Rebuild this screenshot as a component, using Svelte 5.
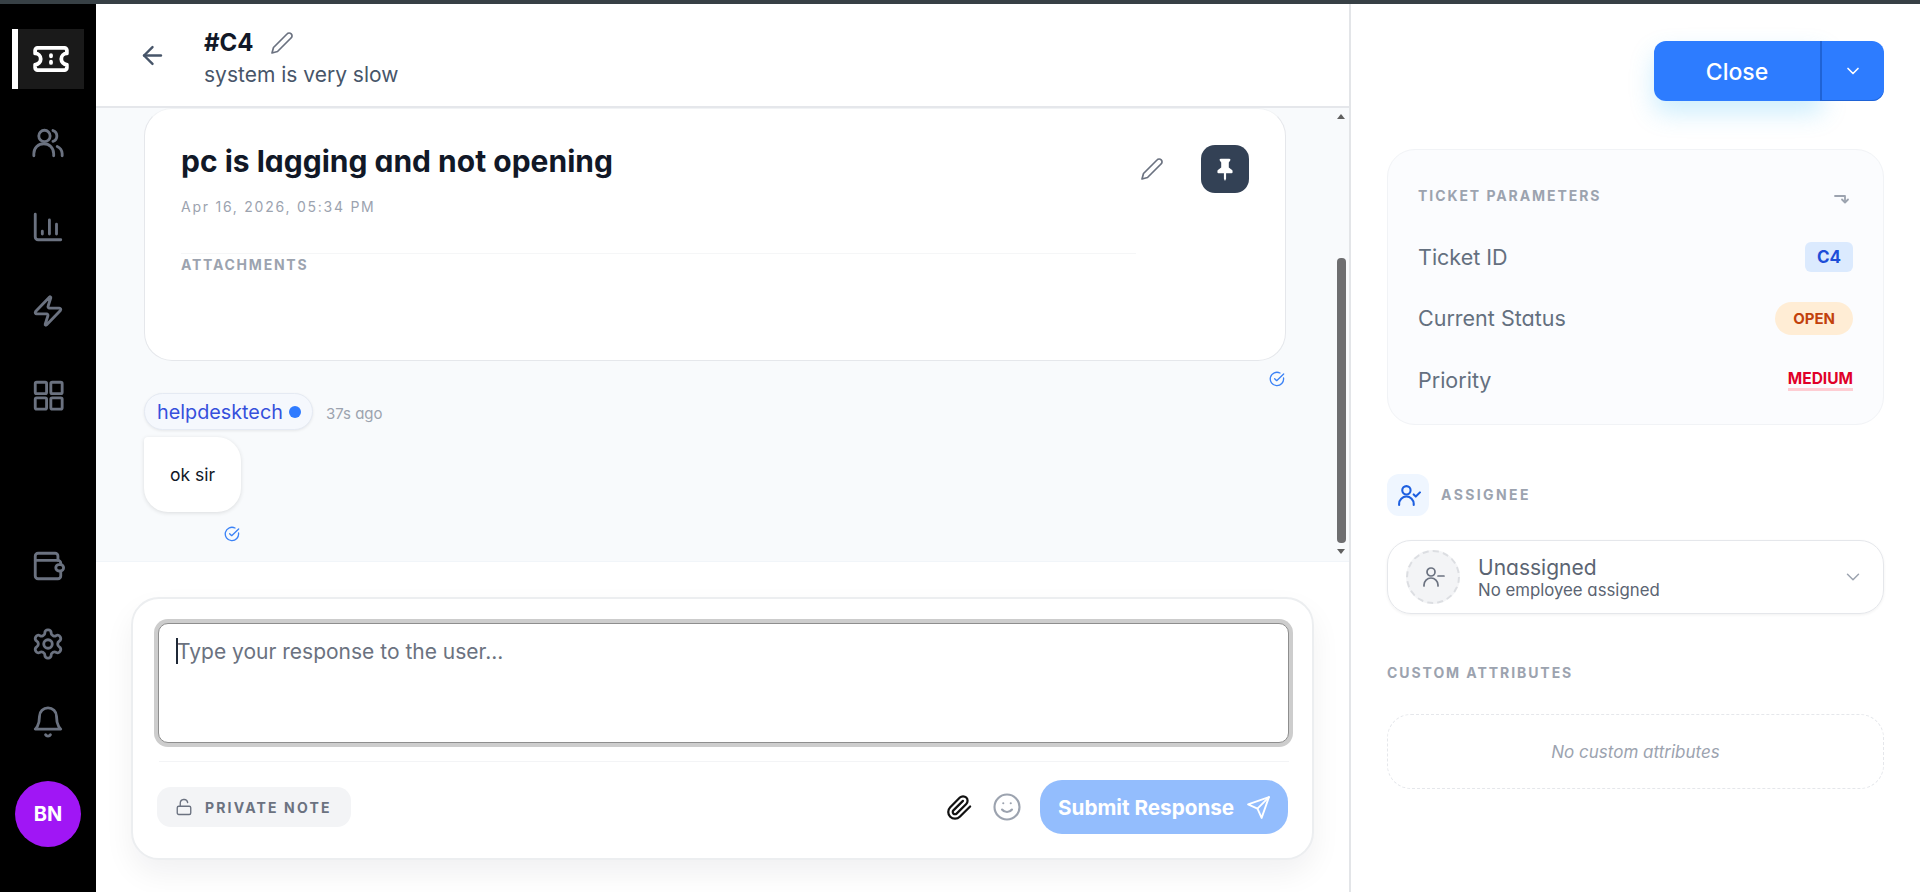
<script>
	const params = [
		{ label: 'Ticket ID', value: 'C4', kind: 'id' },
		{ label: 'Current Status', value: 'OPEN', kind: 'status' },
		{ label: 'Priority', value: 'MEDIUM', kind: 'priority' }
	];
</script>

<div class="app">
	<div class="topbar"></div>
	<div class="body">
		<nav class="nav">
			<div class="nav-item active">
				<svg class="ticket" viewBox="0 0 24 24"><path d="M3.500 5h17A1.500 1.500 0 0 1 22 6.500V8.500a3.500 3.500 0 0 0 0 7v2a1.500 1.500 0 0 1-1.500 1.500h-17A1.500 1.500 0 0 1 2 17.500v-2a3.500 3.500 0 0 0 0-7v-2A1.500 1.500 0 0 1 3.500 5z" /><path d="M12 9.500v.8M12 13.700v.8" /></svg>
			</div>
			<div class="nav-item">
				<svg viewBox="0 0 24 24"><circle cx="9.500" cy="7" r="4" /><path d="M2 21v-1.500a7 7 0 0 1 14 0V21" /><path d="M15.500 3.200a4 4 0 0 1 0 7.600" /><path d="M18.500 14.500a6 6 0 0 1 3.500 5V21" /></svg>
			</div>
			<div class="nav-item">
				<svg viewBox="0 0 24 24"><path d="M3 3v16a2 2 0 0 0 2 2h16" /><path d="M8 17v-2M13 17V7M18 17v-7" /></svg>
			</div>
			<div class="nav-item">
				<svg viewBox="0 0 24 24"><path d="M4 14a1 1 0 0 1-.78-1.630l9.900-10.200a.5.5 0 0 1 .86.460l-1.920 6.020A1 1 0 0 0 13 10h7a1 1 0 0 1 .78 1.630l-9.900 10.200a.5.5 0 0 1-.86-.460l1.920-6.020A1 1 0 0 0 11 14z" /></svg>
			</div>
			<div class="nav-item">
				<svg viewBox="0 0 24 24"><rect x="3" y="3" width="8" height="8" rx="1" /><rect x="14" y="3" width="8" height="8" rx="1" /><rect x="3" y="14" width="8" height="8" rx="1" /><rect x="14" y="14" width="8" height="8" rx="1" /></svg>
			</div>
			<div class="nav-spacer"></div>
			<div class="nav-item small">
				<svg viewBox="0 0 24 24"><path d="M3 8V5a2 2 0 0 1 2-2h12a2 2 0 0 1 2 2v3" /><path d="M3 8h16a2 2 0 0 1 2 2v1M3 8v11a2 2 0 0 0 2 2h14a2 2 0 0 0 2-2v-3" /><rect x="17.500" y="11" width="5.500" height="4.500" rx="2.200" /></svg>
			</div>
			<div class="nav-item small">
				<svg viewBox="0 0 24 24"><path d="M12.220 2h-.44a2 2 0 0 0-2 2v.18a2 2 0 0 1-1 1.730l-.43.25a2 2 0 0 1-2 0l-.15-.08a2 2 0 0 0-2.730.73l-.22.38a2 2 0 0 0 .73 2.730l.15.1a2 2 0 0 1 1 1.720v.51a2 2 0 0 1-1 1.740l-.15.09a2 2 0 0 0-.73 2.730l.22.38a2 2 0 0 0 2.730.73l.15-.08a2 2 0 0 1 2 0l.43.25a2 2 0 0 1 1 1.730V20a2 2 0 0 0 2 2h.44a2 2 0 0 0 2-2v-.18a2 2 0 0 1 1-1.730l.43-.25a2 2 0 0 1 2 0l.15.08a2 2 0 0 0 2.730-.73l.22-.39a2 2 0 0 0-.73-2.730l-.15-.08a2 2 0 0 1-1-1.740v-.5a2 2 0 0 1 1-1.740l.15-.09a2 2 0 0 0 .73-2.730l-.22-.38a2 2 0 0 0-2.730-.73l-.15.08a2 2 0 0 1-2 0l-.43-.25a2 2 0 0 1-1-1.730V4a2 2 0 0 0-2-2z" /><circle cx="12" cy="12" r="3" /></svg>
			</div>
			<div class="nav-item small">
				<svg viewBox="0 0 24 24"><path d="M6 8a6 6 0 0 1 12 0c0 7 3 9 3 9H3s3-2 3-9" /><path d="M10.300 21a1.940 1.940 0 0 0 3.400 0" /></svg>
			</div>
			<div class="avatar">BN</div>
		</nav>

		<main class="main">
			<header class="header">
				<svg class="back" viewBox="0 0 24 24"><path d="m12 19-7-7 7-7" /><path d="M19 12H5" /></svg>
				<div class="heading">
					<div class="heading-top">
						<span class="ticket-no">#C4</span>
						<svg class="pencil" viewBox="0 0 24 24"><path d="M17 3a2.850 2.830 0 1 1 4 4L7.500 20.500 2 22l1.500-5.500Z" /></svg>
					</div>
					<div class="subject">system is very slow</div>
				</div>
			</header>

			<section class="thread">
				<article class="card">
					<div class="card-top">
						<div>
							<h1>pc is lagging and not opening</h1>
							<div class="date">Apr 16, 2026, 05:34 PM</div>
						</div>
						<div class="card-actions">
							<svg class="pencil" viewBox="0 0 24 24"><path d="M17 3a2.850 2.830 0 1 1 4 4L7.500 20.500 2 22l1.500-5.500Z" /></svg>
							<div class="pin">
								<svg viewBox="0 0 24 24"><path d="M8 2.500h8a1 1 0 0 1 .8 1.600L15.500 6v4.500l3 2.500a1.500 1.500 0 0 1 .5 1.200v.8a1 1 0 0 1-1 1h-5v5l-1 2-1-2v-5H6a1 1 0 0 1-1-1v-.8a1.500 1.500 0 0 1 .5-1.200l3-2.500V6L7.200 4.100A1 1 0 0 1 8 2.500z" /></svg>
							</div>
						</div>
					</div>
					<div class="attachments">ATTACHMENTS</div>
				</article>
				<div class="read right">
					<svg viewBox="0 0 24 24"><path d="M21.800 10.500A10 10 0 1 1 16.500 3" /><path d="m8.500 11.500 3 3L22 4.500" /></svg>
				</div>

				<div class="author-row">
					<span class="chip">helpdesktech<i></i></span>
					<span class="ago">37s ago</span>
				</div>
				<div class="bubble">ok sir</div>
				<div class="read under">
					<svg viewBox="0 0 24 24"><path d="M21.800 10.500A10 10 0 1 1 16.500 3" /><path d="m8.500 11.500 3 3L22 4.500" /></svg>
				</div>

				<div class="scrollbar">
					<span class="arrow up"></span>
					<span class="thumb"></span>
					<span class="arrow down"></span>
				</div>
			</section>

			<section class="reply">
				<div class="composer">
					<div class="field">
						<textarea placeholder="Type your response to the user..."></textarea>
						<span class="caret"></span>
					</div>
					<div class="composer-foot">
						<div class="note">
							<svg viewBox="0 0 24 24"><rect x="3" y="11" width="18" height="11" rx="2" /><path d="M7 11V7a5 5 0 0 1 9.900-1" /></svg>
							PRIVATE NOTE
						</div>
						<div class="tools">
							<svg class="clip" viewBox="0 0 24 24"><path d="m21.440 11.050-9.190 9.190a6 6 0 0 1-8.490-8.490l8.570-8.570A4 4 0 1 1 18 8.840l-8.590 8.570a2 2 0 0 1-2.830-2.830l8.490-8.480" /></svg>
							<svg class="smile" viewBox="0 0 24 24"><circle cx="12" cy="12" r="10" /><path d="M8 14s1.500 2 4 2 4-2 4-2" /><path d="M9 9h.01M15 9h.01" /></svg>
							<button class="submit">
								Submit Response
								<svg viewBox="0 0 24 24"><path d="m22 2-7 20-4-9-9-4Z" /><path d="M22 2 11 13" /></svg>
							</button>
						</div>
					</div>
				</div>
			</section>
		</main>

		<aside class="side">
			<div class="close-row">
				<button class="close">Close</button>
				<button class="close-more">
					<svg viewBox="0 0 24 24"><path d="m6 9 6 6 6-6" /></svg>
				</button>
			</div>

			<div class="panel">
				<div class="panel-head">
					<span class="caps">TICKET PARAMETERS</span>
					<svg viewBox="0 0 16 10"><path d="M1 2h10v6" /><path d="m8 5.500 3 3 3-3" /></svg>
				</div>
				{#each params as row}
					<div class="param">
						<span>{row.label}</span>
						<span class="badge {row.kind}">{row.value}</span>
					</div>
				{/each}
			</div>

			<div class="assignee-head">
				<div class="assignee-icon">
					<svg viewBox="0 0 24 24"><circle cx="10" cy="7" r="4" /><path d="M3 21v-1a7 7 0 0 1 14 0v1" /><path d="m17 11 2 2 4-4" /></svg>
				</div>
				<span class="caps wide">ASSIGNEE</span>
			</div>

			<div class="select">
				<div class="select-avatar">
					<svg viewBox="0 0 24 24"><circle cx="10" cy="7" r="4" /><path d="M3 21v-1a7 7 0 0 1 14 0v1" /><path d="M17 11h6" /></svg>
				</div>
				<div class="select-text">
					<div class="select-name">Unassigned</div>
					<div class="select-sub">No employee assigned</div>
				</div>
				<svg class="select-chev" viewBox="0 0 24 24"><path d="m6 9 6 6 6-6" /></svg>
			</div>

			<div class="caps custom-label">CUSTOM ATTRIBUTES</div>
			<div class="empty">No custom attributes</div>
		</aside>
	</div>
</div>

<style>
	:global(body) {
		margin: 0;
		background: #fff;
	}

	.app {
		height: 100vh;
		display: flex;
		flex-direction: column;
		overflow: hidden;
		font-family: Inter, 'Noto Sans', sans-serif;
		font-feature-settings: 'cv11' 1;
		color: #111827;
	}

	svg {
		fill: none;
		stroke: currentColor;
		stroke-width: 2;
		stroke-linecap: round;
		stroke-linejoin: round;
		display: block;
		flex: none;
	}

	.topbar {
		height: 4px;
		flex: none;
		background: #374045;
	}

	.body {
		flex: 1;
		display: flex;
		min-height: 0;
	}

	/* left rail */
	.nav {
		width: 96px;
		flex: none;
		background: #000;
		display: flex;
		flex-direction: column;
		align-items: center;
		padding-top: 25px;
		box-sizing: border-box;
		color: #6b7280;
	}

	.nav-item {
		width: 72px;
		height: 60px;
		margin-bottom: 24px;
		display: flex;
		align-items: center;
		justify-content: center;
	}

	.nav-item svg {
		width: 34px;
		height: 34px;
	}

	.nav-item.small {
		margin-bottom: 18px;
	}

	.nav-item.active {
		background: #1a1a1a;
		box-shadow: inset 6px 0 0 #fff;
		color: #fff;
	}

	.nav-item .ticket {
		width: 38px;
		height: 38px;
		stroke-width: 2.400;
		margin-left: 6px;
	}

	.nav-spacer {
		height: 87px;
	}

	.avatar {
		width: 66px;
		height: 66px;
		margin-top: 11px;
		border-radius: 50%;
		background: #a016f5;
		color: #fff;
		font-weight: 700;
		font-size: 20px;
		display: flex;
		align-items: center;
		justify-content: center;
	}

	/* middle column */
	.main {
		width: 1253px;
		flex: none;
		display: flex;
		flex-direction: column;
		border-right: 2px solid #e3e5e8;
	}

	.header {
		height: 104px;
		flex: none;
		box-sizing: border-box;
		display: flex;
		align-items: center;
		padding-left: 42px;
		border-bottom: 2px solid #e5e7eb;
	}

	.back {
		width: 29px;
		height: 29px;
		margin-top: 1px;
		color: #475569;
	}

	.heading {
		margin-left: 37px;
		margin-top: 5px;
	}

	.heading-top {
		display: flex;
		align-items: center;
		gap: 16px;
	}

	.ticket-no {
		font-size: 24px;
		font-weight: 700;
		line-height: 34px;
	}

	.pencil {
		width: 24px;
		height: 24px;
		color: #6b7280;
		stroke-width: 1.700;
	}

	.subject {
		font-size: 21px;
		line-height: 30px;
		color: #475569;
	}

	.thread {
		position: relative;
		height: 453px;
		flex: none;
		background: #f8fafc;
		padding-left: 48px;
		padding-right: 63px;
		overflow: hidden;
	}

	.card {
		height: 253px;
		box-sizing: border-box;
		background: #fff;
		border: 1px solid #e5e7eb;
		border-top-color: #f1f3f5;
		border-radius: 28px;
		padding: 33px 35px 0 36px;
	}

	.card-top {
		display: flex;
		justify-content: space-between;
		align-items: flex-start;
		padding-bottom: 37px;
		background: linear-gradient(#f5f6f7, #f5f6f7) left bottom / 955px 1px no-repeat;
	}

	h1 {
		margin: 0;
		font-size: 30px;
		font-weight: 700;
		line-height: 38px;
		color: #111827;
	}

	.date {
		margin-top: 17px;
		font-size: 14px;
		line-height: 20px;
		letter-spacing: 1.750px;
		color: #9ca3af;
	}

	.card-actions {
		display: flex;
		align-items: center;
		gap: 37px;
		margin-right: 1px;
		margin-top: 3px;
	}

	.pin {
		width: 48px;
		height: 48px;
		border-radius: 14px;
		background: #334155;
		color: #fff;
		display: flex;
		align-items: center;
		justify-content: center;
	}

	.pin svg {
		width: 26px;
		height: 26px;
		fill: #fff;
		stroke: none;
	}

	.attachments {
		margin-top: 1px;
		font-size: 14px;
		line-height: 20px;
		font-weight: 700;
		letter-spacing: 1.750px;
		color: #9ca3af;
	}

	.read {
		color: #3b82f6;
	}

	.read svg {
		width: 16px;
		height: 16px;
		stroke-width: 2;
	}

	.read.right {
		display: flex;
		justify-content: flex-end;
		margin-top: 10px;
		padding-right: 1px;
	}

	.author-row {
		display: flex;
		align-items: center;
		gap: 13px;
		margin-top: 6px;
	}

	.chip {
		display: inline-flex;
		align-items: center;
		gap: 6px;
		box-sizing: border-box;
		height: 37px;
		padding: 0 11px 0 12px;
		font-size: 19.800px;
		color: #3650dc;
		background: #f5f8fd;
		border: 1px solid #e5eaf3;
		border-radius: 19px;
		box-shadow: 0 1px 3px rgba(0, 0, 0, 0.08);
	}

	.chip i {
		width: 12px;
		height: 12px;
		border-radius: 50%;
		background: #2f7bff;
	}

	.ago {
		margin-top: 3px;
		font-size: 15px;
		color: #9ca3af;
	}

	.bubble {
		width: 97px;
		height: 75px;
		box-sizing: border-box;
		margin-top: 7px;
		background: #fff;
		border-radius: 4px 24px 24px 24px;
		box-shadow: 0 1px 4px rgba(0, 0, 0, 0.12);
		display: flex;
		align-items: center;
		justify-content: center;
		font-size: 17.500px;
		color: #111827;
	}

	.read.under {
		margin-top: 14px;
		margin-left: 80px;
	}

	.scrollbar {
		position: absolute;
		top: 0;
		right: 3px;
		bottom: 0;
		width: 9px;
	}

	.arrow {
		position: absolute;
		left: 0;
		width: 0;
		height: 0;
		border-left: 4.500px solid transparent;
		border-right: 4.500px solid transparent;
	}

	.arrow.up {
		top: 6px;
		border-bottom: 5px solid #606060;
	}

	.arrow.down {
		bottom: 7px;
		border-top: 5px solid #606060;
	}

	.thumb {
		position: absolute;
		top: 150px;
		left: 0;
		width: 9px;
		height: 285px;
		border-radius: 4px;
		background: #6e6e70;
	}

	.reply {
		flex: 1;
		border-top: 1px solid #f1f5f9;
		padding: 35px 35px 0;
	}

	.composer {
		height: 263px;
		box-sizing: border-box;
		padding: 24px 23px 24px 26px;
		background: #fff;
		border: 2px solid #eceef0;
		border-radius: 28px;
		box-shadow: 0 14px 30px rgba(15, 23, 42, 0.06);
	}

	.field {
		position: relative;
		height: 120px;
		margin-left: -1px;
	}

	textarea {
		display: block;
		width: 100%;
		height: 120px;
		box-sizing: border-box;
		padding: 14px 18px;
		resize: none;
		border: 1px solid #8e8e8e;
		border-radius: 10px;
		box-shadow: 0 0 0 4px #cdcdcd;
		outline: none;
		background: #fff;
		font: inherit;
		font-size: 21px;
		line-height: 28px;
	}

	textarea::placeholder {
		color: #6b7280;
		opacity: 1;
	}

	.caret {
		position: absolute;
		left: 18px;
		top: 15px;
		width: 2px;
		height: 26px;
		background: #1f2937;
	}

	.composer-foot {
		display: flex;
		align-items: center;
		justify-content: space-between;
		margin-top: 18px;
		padding-top: 18px;
		border-top: 1px solid #f3f4f6;
	}

	.note {
		display: flex;
		align-items: center;
		gap: 12px;
		box-sizing: border-box;
		height: 40px;
		margin-left: -2px;
		padding: 0 19px 0 18px;
		border-radius: 14px;
		background: #f3f4f6;
		font-size: 14px;
		font-weight: 700;
		letter-spacing: 2.150px;
		color: #6b7280;
	}

	.note svg {
		width: 18px;
		height: 18px;
		stroke-width: 1.800;
	}

	.tools {
		display: flex;
		align-items: center;
	}

	.clip {
		width: 27px;
		height: 27px;
		color: #111;
	}

	.smile {
		width: 30px;
		height: 30px;
		margin-left: 19px;
		color: #9ca3af;
		stroke-width: 1.700;
	}

	.submit {
		display: flex;
		align-items: center;
		gap: 12px;
		box-sizing: border-box;
		width: 248px;
		height: 54px;
		margin-left: 18px;
		margin-right: 1px;
		padding: 0 0 0 18px;
		border: none;
		border-radius: 22px;
		background: #93bdfd;
		color: #fff;
		font: inherit;
		font-size: 20.700px;
		font-weight: 700;
	}

	.submit svg {
		width: 25px;
		height: 25px;
		stroke-width: 1.800;
	}

	/* right column */
	.side {
		flex: 1;
		padding: 37px 36px 0 36px;
		min-width: 0;
	}

	.close-row {
		display: flex;
		justify-content: flex-end;
	}

	.close,
	.close-more {
		height: 60px;
		border: none;
		background: #2d7cff;
		color: #fff;
		font: inherit;
	}

	.close {
		width: 168px;
		padding-top: 2px;
		border-radius: 12px 0 0 12px;
		border-right: 2px solid #1f63d6;
		font-size: 23px;
		font-weight: 500;
		box-shadow: 0 12px 24px rgba(56, 189, 248, 0.25);
	}

	.close-more {
		width: 62px;
		padding: 0;
		border-radius: 0 12px 12px 0;
		box-shadow: inset 0 -1px 0 #1f63d6;
		display: flex;
		align-items: center;
		justify-content: center;
	}

	.close-more svg {
		width: 20px;
		height: 20px;
	}

	.panel {
		margin-top: 48px;
		height: 276px;
		box-sizing: border-box;
		padding: 35px 30px 0;
		background: #fbfcfe;
		border: 1px solid #f1f3f6;
		border-radius: 28px;
	}

	.caps {
		font-size: 14px;
		line-height: 20px;
		font-weight: 700;
		letter-spacing: 1.930px;
		color: #9ca3af;
	}

	.caps.wide {
		letter-spacing: 2.400px;
	}

	.panel-head {
		display: flex;
		align-items: center;
		justify-content: space-between;
		height: 22px;
		margin-bottom: 19px;
	}

	.panel-head svg {
		width: 16px;
		height: 10px;
		margin-top: 6px;
		margin-right: 3px;
		color: #9ca3af;
		stroke-width: 1.800;
	}

	.param {
		display: flex;
		align-items: center;
		justify-content: space-between;
		height: 61.500px;
		font-size: 21.500px;
		color: #64707f;
	}

	.badge {
		font-size: 15px;
		font-weight: 700;
		display: flex;
		align-items: center;
	}

	.badge.id {
		height: 30px;
		padding: 0 12px;
		border-radius: 6px;
		background: #dbeafe;
		color: #1d4ed8;
		font-size: 17px;
	}

	.badge.status {
		height: 33px;
		padding: 0 18px;
		border-radius: 17px;
		background: #ffedd5;
		color: #c2410c;
	}

	.badge.priority {
		height: 20px;
		border-bottom: 3px solid #fecdd3;
		color: #e00028;
		font-size: 15.500px;
	}

	.assignee-head {
		display: flex;
		align-items: center;
		gap: 12px;
		margin-top: 49px;
	}

	.assignee-icon {
		width: 42px;
		height: 42px;
		border-radius: 12px;
		background: #eff6ff;
		color: #1d5fe0;
		display: flex;
		align-items: center;
		justify-content: center;
	}

	.assignee-icon svg {
		width: 25px;
		height: 25px;
	}

	.select {
		display: flex;
		align-items: center;
		height: 74px;
		box-sizing: border-box;
		margin-top: 24px;
		padding: 0 19px 0 18px;
		border: 1px solid #e5e7eb;
		border-radius: 24px;
		box-shadow: 0 1px 3px rgba(0, 0, 0, 0.06);
	}

	.select-avatar {
		width: 54px;
		height: 54px;
		box-sizing: border-box;
		border: 2px dashed #dcdee2;
		border-radius: 50%;
		background: #f3f4f6;
		color: #6b7280;
		display: flex;
		align-items: center;
		justify-content: center;
	}

	.select-avatar svg {
		width: 24px;
		height: 24px;
		stroke-width: 1.700;
	}

	.select-text {
		flex: 1;
		margin-left: 18px;
		color: #5b6472;
	}

	.select-name {
		font-size: 21px;
		line-height: 25px;
	}

	.select-sub {
		font-size: 16.800px;
		line-height: 20px;
	}

	.select-chev {
		width: 22px;
		height: 22px;
		color: #9ca3af;
		stroke-width: 1.600;
	}

	.custom-label {
		margin-top: 49px;
	}

	.empty {
		display: flex;
		align-items: center;
		justify-content: center;
		height: 75px;
		box-sizing: border-box;
		margin-top: 31px;
		border: 1px dashed #e5e7eb;
		border-radius: 24px;
		font-size: 17px;
		font-style: italic;
		color: #9ca3af;
	}
</style>
